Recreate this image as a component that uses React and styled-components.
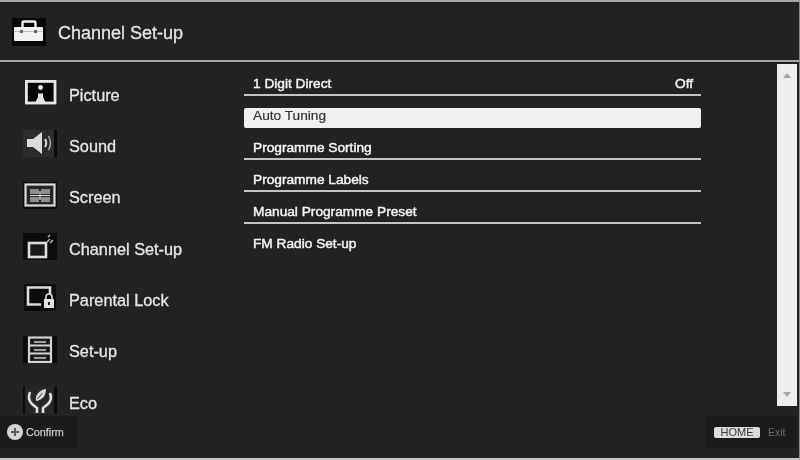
import React from 'react'
import styled, { createGlobalStyle } from 'styled-components'

const Global = createGlobalStyle`
    html, body {
        margin: 0;
        padding: 0;
        background: #222;
        overflow: hidden;
    }
`

const Screen = styled.div`
    position: relative;
    width: 800px;
    height: 460px;
    box-sizing: border-box;
    background: #222222;
    border-top: 2px solid #a8a8a8;
    border-bottom: 2px solid #c8c8c8;
    border-right: 1px solid #8a8a8a;
    font-family: "Liberation Sans", Arial, sans-serif;
    color: #e8e8e8;
    filter: blur(0.6px);
    overflow: hidden;
`

const Header = styled.header`
    height: 60px;
    box-sizing: border-box;
    display: flex;
    align-items: center;
    padding: 2px 0 0 12px;
    border-bottom: 2px solid #a6a6a6;
`

const HeaderIcon = styled.span`
    width: 34px;
    height: 28px;
    flex: none;
    display: block;

    svg {
        display: block;
    }
`

const HeaderTitle = styled.h1`
    margin: 2px 0 0 12px;
    font-size: 18px;
    font-weight: normal;
    color: #e4e4e4;
    -webkit-text-stroke: 0.3px #e4e4e4;
`

const Body = styled.div`
    display: flex;
    height: 394px;
`

const Sidebar = styled.nav`
    width: 244px;
    flex: none;
    display: flex;
    flex-direction: column;
    padding: 17px 0 0 23px;
    box-sizing: border-box;
    gap: 19.35px;
`

const NavItem = styled.div`
    display: flex;
    align-items: center;
    height: 32px;
    gap: 12px;
    font-size: 16.3px;
    color: #e6e6e6;
    -webkit-text-stroke: 0.3px #e6e6e6;
`

const IconBox = styled.span`
    width: 34px;
    height: 27px;
    flex: none;
    display: block;
    margin-top: -5px;

    svg {
        display: block;
    }
`

const Menu = styled.ul`
    list-style: none;
    margin: 2px 0 0;
    padding: 0;
    width: 457px;
    flex: none;
`

const MenuRow = styled.li`
    height: 32px;
    box-sizing: border-box;
    display: flex;
    justify-content: space-between;
    align-items: center;
    padding: 9px 9px 0;
    font-size: 13.7px;
    color: #f4f4f4;
    -webkit-text-stroke: 0.45px #f4f4f4;
    border-bottom: 2px solid ${p => (p.$last ? 'transparent' : '#c4c4c4')};
`

const ActiveRow = styled(MenuRow)`
    height: 20px;
    margin-top: 12px;
    padding: 0 9px 5px;
    background: #f0f0f0;
    color: #333333;
    -webkit-text-stroke: 0.2px #333333;
    border-radius: 2px;
    border-bottom: none;
`

const RowValue = styled.span`
    margin-right: -1px;
`

const Scrollbar = styled.div`
    width: 20px;
    height: 342px;
    margin: 2px 0 0 76px;
    flex: none;
    background: #eeeeee;
    display: flex;
    flex-direction: column;
    justify-content: space-between;
    align-items: center;
    padding: 9px 0;
    box-sizing: border-box;
`

const Arrow = styled.span`
    width: 0;
    height: 0;
    border-left: 4px solid transparent;
    border-right: 4px solid transparent;
    border-${p => (p.$down ? 'top' : 'bottom')}: 5px solid #a8a8a8;
`

const Hint = styled.div`
    position: absolute;
    top: 414px;
    height: 32px;
    background: #1a1a1a;
    display: flex;
    align-items: center;
    box-sizing: border-box;
`

const ConfirmHint = styled(Hint)`
    left: 0;
    width: 77px;
    padding-left: 7px;
    gap: 3px;
    font-size: 10.8px;
    color: #cccccc;
    -webkit-text-stroke: 0.25px #cccccc;
`

const HomeHint = styled(Hint)`
    right: 2px;
    width: 91px;
    padding-left: 8px;
    gap: 8px;
    font-size: 10.5px;
    color: #6e6e6e;
`

const HomeKey = styled.span`
    width: 46px;
    height: 11px;
    line-height: 11px;
    background: #dcdcdc;
    color: #3a3a3a;
    border-radius: 2px;
    text-align: center;
    font-size: 11px;
`

const ToolboxIcon = () => (
    <svg viewBox="0 0 34 28" width="34" height="28">
        <rect width="34" height="28" fill="#080808" />
        <path d="M10.500 9V5q0-1.500 1.500-1.500h10q1.500 0 1.500 1.500v4" fill="none" stroke="#f0f0f0" strokeWidth="2.400" />
        <rect x="2" y="9" width="29" height="14" rx="1" fill="#f2f2f2" />
        <path d="M2 13.500h29" stroke="#bcbcbc" strokeWidth="1" />
        <path d="M8 12h3v3H8z M22 12h3v3h-3z" fill="#666" />
    </svg>
)

const PictureIcon = () => (
    <svg viewBox="0 0 34 27" width="34" height="27">
        <rect x="3.400" y="2.400" width="28.600" height="21.600" fill="#060606" stroke="#e6e6e6" strokeWidth="2.800" />
        <circle cx="17.500" cy="8.500" r="2.400" fill="#e4e4e4" />
        <path d="M15 23v-8.500h5V23z M12.500 23l2.500-5h5l2.500 5z" fill="#e4e4e4" />
    </svg>
)

const SoundIcon = () => (
    <svg viewBox="0 0 34 27" width="34" height="27">
        <rect width="34" height="27" fill="#2c2c2c" />
        <rect x="31" width="3" height="27" fill="#0a0a0a" />
        <path d="M4 9h6l9-7v22l-9-7H4z" fill="#dcdcdc" />
        <path d="M22 9q2.500 4 0 8" fill="none" stroke="#dcdcdc" strokeWidth="2" />
        <path d="M25.500 6q4 7 0 14" fill="none" stroke="#a8a8a8" strokeWidth="1.500" />
    </svg>
)

const ScreenIcon = () => (
    <svg viewBox="0 0 34 27" width="34" height="27">
        <rect width="34" height="27" fill="#0c0c0c" />
        <rect x="2.500" y="2.500" width="29" height="21" fill="#262626" stroke="#dadada" strokeWidth="2.200" />
        <path d="M7 7h9v5H7z M18 7h9v5h-9z M7 15h9v5H7z M18 15h9v5h-9z" fill="#8e8e8e" />
        <path d="M7 13.500h20M17 9v9" stroke="#e0e0e0" strokeWidth="1.200" />
    </svg>
)

const ChannelIcon = () => (
    <svg viewBox="0 0 34 27" width="34" height="27">
        <rect width="34" height="27" fill="#0c0c0c" />
        <rect x="6" y="10" width="17" height="14" fill="#1a1a1a" stroke="#dcdcdc" strokeWidth="2.600" />
        <path d="M24 9l3-3M27 10l3-3M25 4l2-2" stroke="#b8b8b8" strokeWidth="1.500" />
    </svg>
)

const LockIcon = () => (
    <svg viewBox="0 0 34 27" width="34" height="27">
        <rect x="1" width="32" height="27" fill="#0c0c0c" />
        <path d="M18 20.500H5V3.500h22v7" fill="none" stroke="#dcdcdc" strokeWidth="2.600" />
        <path d="M23 15v-2a3 3 0 0 1 6 0v2" fill="none" stroke="#dcdcdc" strokeWidth="1.600" />
        <rect x="21" y="15" width="10" height="9" fill="#e2e2e2" />
        <rect x="25" y="18" width="2" height="3" fill="#222" />
    </svg>
)

const SetupIcon = () => (
    <svg viewBox="0 0 34 27" width="34" height="27">
        <rect width="34" height="27" fill="#0c0c0c" />
        <rect x="6" y="1.500" width="22" height="24.500" fill="#1a1a1a" stroke="#d4d4d4" strokeWidth="2.200" />
        <path d="M6 9.500h22M6 17.500h22" stroke="#d4d4d4" strokeWidth="2" />
        <path d="M11 6h12M11 14h12M11 22h12" stroke="#a0a0a0" strokeWidth="2" />
    </svg>
)

const EcoIcon = () => (
    <svg viewBox="0 0 34 27" width="34" height="27">
        <rect width="34" height="27" fill="#262626" />
        <path d="M0 0h2v27H0z M31 0h3v27h-3z" fill="#0a0a0a" />
        <path d="M13 14c-1-6 3-11 10-12 0 6-3 11-10 12z" fill="#dadada" />
        <path d="M14.500 12l5-6" stroke="#333" strokeWidth="1" />
        <path d="M7 5c-2 5-1 9 2 12l5 4v5M27 6c2 5 1 8-2 11l-5 4v5" fill="none" stroke="#e0e0e0" strokeWidth="2.600" />
    </svg>
)

const PlusIcon = () => (
    <svg viewBox="0 0 16 16" width="16" height="16">
        <circle cx="8" cy="8" r="8" fill="#d4d4d4" />
        <path d="M8 4v8M4 8h8" stroke="#5a5a5a" strokeWidth="2" />
    </svg>
)

const navItems = [
    { label: 'Picture', icon: <PictureIcon /> },
    { label: 'Sound', icon: <SoundIcon /> },
    { label: 'Screen', icon: <ScreenIcon /> },
    { label: 'Channel Set-up', icon: <ChannelIcon /> },
    { label: 'Parental Lock', icon: <LockIcon /> },
    { label: 'Set-up', icon: <SetupIcon /> },
    { label: 'Eco', icon: <EcoIcon /> },
]

function App() {
    return (
        <Screen>
            <Global />
            <Header>
                <HeaderIcon><ToolboxIcon /></HeaderIcon>
                <HeaderTitle>Channel Set-up</HeaderTitle>
            </Header>
            <Body>
                <Sidebar>
                    {navItems.map(item => (
                        <NavItem key={item.label}>
                            <IconBox>{item.icon}</IconBox>
                            {item.label}
                        </NavItem>
                    ))}
                </Sidebar>
                <Menu>
                    <MenuRow>1 Digit Direct<RowValue>Off</RowValue></MenuRow>
                    <ActiveRow>Auto Tuning</ActiveRow>
                    <MenuRow>Programme Sorting</MenuRow>
                    <MenuRow>Programme Labels</MenuRow>
                    <MenuRow>Manual Programme Preset</MenuRow>
                    <MenuRow $last>FM Radio Set-up</MenuRow>
                </Menu>
                <Scrollbar>
                    <Arrow />
                    <Arrow $down />
                </Scrollbar>
            </Body>
            <ConfirmHint><PlusIcon />Confirm</ConfirmHint>
            <HomeHint><HomeKey>HOME</HomeKey>Exit</HomeHint>
        </Screen>
    )
}

export default App
